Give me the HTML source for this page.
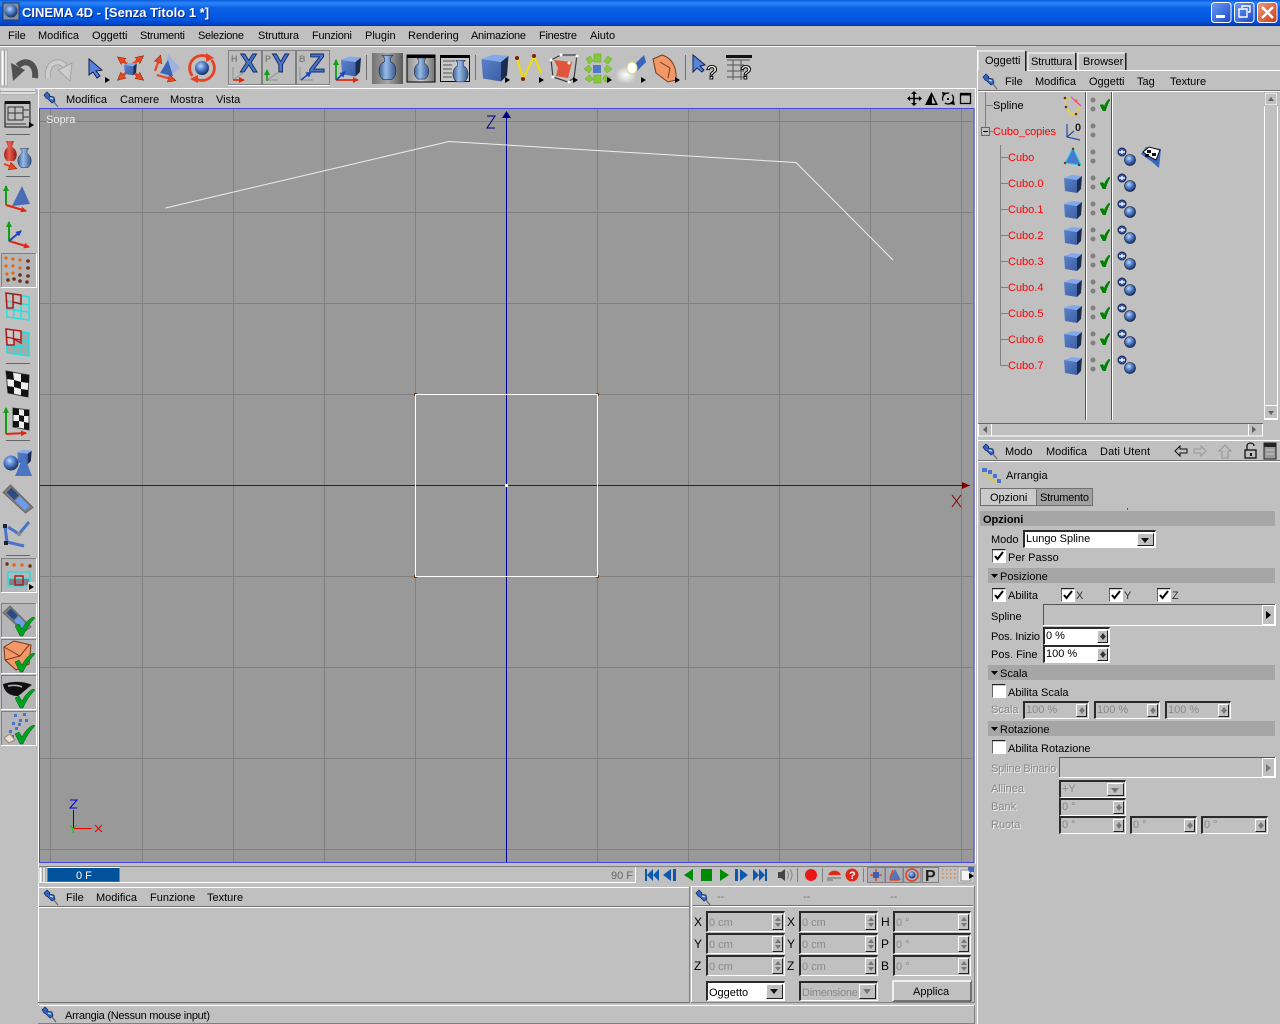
<!DOCTYPE html>
<html><head><meta charset="utf-8"><title>CINEMA 4D</title>
<style>
html,body{margin:0;padding:0;width:1280px;height:1024px;overflow:hidden;background:#c0c0c0}
body{position:relative;font:11px "Liberation Sans",sans-serif;color:#000}
svg{position:absolute;left:0;top:0}
svg text{font-family:"Liberation Sans",sans-serif;font-size:11px;fill:#000}
.r{fill:#f00!important}
.b{font-weight:bold}
.tt{position:absolute;left:22px;top:5px;color:#fff;font:bold 13px/16px "Liberation Sans",sans-serif;text-shadow:1px 1px 0 #0a2a90;white-space:nowrap}
.l{position:absolute;line-height:12px;color:#888;text-shadow:1px 1px 0 #eee;white-space:nowrap}
.f{position:absolute;box-sizing:border-box;border:solid;border-width:2px 1px 1px 2px;border-color:#2a2a2a #fff #fff #2a2a2a;background:#c0c0c0;color:#8a8a8a;line-height:14px;padding-left:1px;white-space:nowrap}
.w{background:#fff;color:#000}
.f i{position:absolute;right:1px;top:1px;bottom:1px;width:9px;background:#c0c0c0;border-right:1px solid #222;border-bottom:1px solid #222;border-top:1px solid #fff;border-left:1px solid #fff}
.f i:before,.f i:after{content:"";position:absolute;left:2px;border-left:3px solid transparent;border-right:3px solid transparent}
.f i:before{top:2px;border-bottom:4px solid #333}
.f i:after{bottom:2px;border-top:4px solid #333}
.f.g i:before{border-bottom-color:#777}.f.g i:after{border-top-color:#777}
.f u{position:absolute;right:1px;top:1px;bottom:1px;width:15px;background:#c0c0c0;border-right:1px solid #222;border-bottom:1px solid #222;border-top:1px solid #fff;border-left:1px solid #fff}
.f u:after{content:"";position:absolute;left:3px;top:4px;border-left:4px solid transparent;border-right:4px solid transparent;border-top:5px solid #111}
.f.g u:after{border-top-color:#777}
.big{padding-top:3px;line-height:15px}
</style></head><body>
<svg width="1280" height="1024" viewBox="0 0 1280 1024" xmlns="http://www.w3.org/2000/svg">
<defs>
<linearGradient id="tb" x1="0" y1="0" x2="0" y2="1"><stop offset="0" stop-color="#0a5ae0"/><stop offset=".12" stop-color="#2c86f8"/><stop offset=".3" stop-color="#0c62e6"/><stop offset=".75" stop-color="#0055e0"/><stop offset=".93" stop-color="#0044c8"/><stop offset="1" stop-color="#00309c"/></linearGradient>
<linearGradient id="wb" x1="0" y1="0" x2="1" y2="1"><stop offset="0" stop-color="#6c9cf4"/><stop offset="1" stop-color="#1c48c8"/></linearGradient>
<linearGradient id="wr" x1="0" y1="0" x2="1" y2="1"><stop offset="0" stop-color="#ee9a80"/><stop offset="1" stop-color="#c83c18"/></linearGradient>
<linearGradient id="cf" x1="0" y1="0" x2="1" y2="1"><stop offset="0" stop-color="#5a82cc"/><stop offset="1" stop-color="#3c5ea2"/></linearGradient>
<radialGradient id="sp" cx=".4" cy=".35" r=".7"><stop offset="0" stop-color="#b8d4fc"/><stop offset=".5" stop-color="#4a78c4"/><stop offset="1" stop-color="#12264f"/></radialGradient>
<linearGradient id="va" x1="0" y1="0" x2="1" y2="0"><stop offset="0" stop-color="#3a5c8c"/><stop offset=".4" stop-color="#98bce8"/><stop offset="1" stop-color="#38568a"/></linearGradient>
<linearGradient id="vr" x1="0" y1="0" x2="1" y2="0"><stop offset="0" stop-color="#a01c14"/><stop offset=".4" stop-color="#e86050"/><stop offset="1" stop-color="#901810"/></linearGradient>
<linearGradient id="bgv" x1="0" y1="0" x2="1" y2="0"><stop offset="0" stop-color="#909090"/><stop offset=".5" stop-color="#d0d0d0"/><stop offset="1" stop-color="#707070"/></linearGradient>
<radialGradient id="glow"><stop offset="0" stop-color="#fff"/><stop offset="1" stop-color="#fff" stop-opacity="0"/></radialGradient>
<marker id="ar" markerUnits="userSpaceOnUse" markerWidth="9" markerHeight="9" refX="6" refY="4" orient="auto"><path d="M0 0L8 4L0 8Z" fill="#e84820" stroke="#801808" stroke-width=".5"/></marker>
<marker id="ag" markerUnits="userSpaceOnUse" markerWidth="7" markerHeight="7" refX="5" refY="3" orient="auto"><path d="M0 0L6 3L0 6Z" fill="#10a010"/></marker>
<marker id="ab" markerUnits="userSpaceOnUse" markerWidth="7" markerHeight="7" refX="5" refY="3" orient="auto"><path d="M0 0L6 3L0 6Z" fill="#1848c0"/></marker>
<marker id="ao" markerUnits="userSpaceOnUse" markerWidth="7" markerHeight="7" refX="5" refY="3" orient="auto"><path d="M0 0L6 3L0 6Z" fill="#e02810"/></marker>
<symbol id="pin" viewBox="0 0 16 16" width="16" height="16" overflow="visible"><path d="M11 10L15 15" stroke="#667" stroke-width="1.2"/><path d="M1 3L4 0L7 3L6 4L11 5L12 9L9 11L5 7L3 6Z" fill="#2f66cc" stroke="#14264e" stroke-width=".7"/><path d="M7 6L10 7" stroke="#b8dcff" stroke-width="1.4"/></symbol>
<symbol id="cube" viewBox="0 0 18 20" width="18" height="20"><path d="M0 4L13 6L13 19L1 17Z" fill="url(#cf)"/><path d="M0 4L8 1L18 2L13 6Z" fill="#84a8ec"/><path d="M13 6L18 2L17 15L13 19Z" fill="#1c2c4c"/></symbol>
<symbol id="tg" viewBox="0 0 19 19" width="19" height="19"><circle cx="5" cy="5" r="4" fill="#3a5aa8" stroke="#101e48"/><path d="M2 5H8M5 3V7" stroke="#f0f4ff" stroke-width="1.4"/><circle cx="13" cy="13" r="5.5" fill="url(#sp)" stroke="#101c38" stroke-width=".6"/></symbol>
<symbol id="ok" viewBox="0 0 10 12" width="10" height="12"><path d="M0 6L3 5.500L4.200 7.500C5.200 4.500 7 2 9 0L10 1C8 4 6.500 8 5.500 12L3 12Z" fill="#008000" stroke="#008000" stroke-width=".5"/></symbol>
<symbol id="big" viewBox="0 0 20 20" width="20" height="20"><path d="M0 9L4 7L7 12C10 6 14 2 18 0L20 1C15 6 11 12 8 19L5 19Z" fill="#00a020" stroke="#006010" stroke-width=".5"/></symbol>
<symbol id="dots" viewBox="0 0 6 15" width="6" height="15"><circle cx="3" cy="3" r="2.5" fill="#808080"/><circle cx="3" cy="12" r="2.5" fill="#808080"/></symbol>
<symbol id="cb" viewBox="0 0 14 14" width="14" height="14"><rect width="14" height="14" fill="#fff"/><path d="M0 13.5V.5H13.5" stroke="#222" stroke-width="1.4" fill="none"/><path d="M3 7L5.500 10L11 3" stroke="#000" stroke-width="2" fill="none"/></symbol>
<symbol id="cb0" viewBox="0 0 14 14" width="14" height="14"><rect width="14" height="14" fill="#fff"/><path d="M0 13.5V.5H13.5" stroke="#222" stroke-width="1.4" fill="none"/></symbol>
<symbol id="vase" viewBox="0 0 18 24" width="18" height="24"><path d="M4 0H14L12 2.500V6C18 9 19 18 13 23H5C-1 18 0 9 6 6V2.500Z" fill="url(#va)" stroke="#203050" stroke-width=".6"/></symbol>
<symbol id="pb" viewBox="0 0 36 35" width="36" height="35"><rect width="36" height="35" fill="#fff"/><rect width="35" height="34" fill="#808080"/><rect x="1" y="1" width="34" height="33" fill="#b6b6b8"/></symbol>
<symbol id="tri" viewBox="0 0 5 6" width="5" height="6"><path d="M0 0L5 3L0 6Z" fill="#000"/></symbol>
<symbol id="qm" viewBox="0 0 14 18" width="14" height="18" overflow="visible"><text x="1" y="15" style="font-size:19px;font-weight:bold;fill:#fff;stroke:#111;stroke-width:1.100">?</text></symbol>
<symbol id="film" viewBox="0 0 34 32" width="34" height="32"><path d="M1 9L9 1L33 25L25 31Z" fill="#7c7c7c" stroke="#666"/><path d="M5 9L10 4L18 12L13 17Z" fill="#2c4a84"/><path d="M14 18L19 13L29 24L24 28Z" fill="#6c9cf0"/></symbol>
</defs>

<rect width="1280" height="1024" fill="#c0c0c0"/>
<!-- title bar -->
<rect width="1280" height="26" fill="url(#tb)"/>
<rect x="3" y="3" width="16" height="17" fill="#8090a8" stroke="#303850"/><circle cx="11" cy="11" r="6.5" fill="url(#sp)"/>
<rect x="1211.5" y="2.5" width="19.5" height="20" rx="3" fill="url(#wb)" stroke="#fff"/><rect x="1216" y="15" width="9" height="3" fill="#fff"/>
<rect x="1234.5" y="2.5" width="19.5" height="20" rx="3" fill="url(#wb)" stroke="#fff"/><path d="M1242 8V6H1250V12H1248M1239 9H1247V17H1239Z" fill="none" stroke="#fff" stroke-width="1.4"/>
<rect x="1257.5" y="2.5" width="19.5" height="20" rx="3" fill="url(#wr)" stroke="#fff"/><path d="M1262 7L1273 18M1273 7L1262 18" stroke="#fff" stroke-width="2.4"/>

<!-- menu -->
<g>
<text x="8" y="39">File</text><text x="38" y="39">Modifica</text><text x="92" y="39">Oggetti</text><text x="140" y="39" textLength="45">Strumenti</text><text x="198" y="39" textLength="46">Selezione</text><text x="258" y="39" textLength="41">Struttura</text><text x="312" y="39" textLength="40">Funzioni</text><text x="365" y="39">Plugin</text><text x="408" y="39">Rendering</text><text x="471" y="39" textLength="55">Animazione</text><text x="539" y="39" textLength="38">Finestre</text><text x="590" y="39">Aiuto</text>
</g>
<rect y="45" width="1280" height="1" fill="#707070"/><rect y="46" width="975" height="1" fill="#fff"/>

<!-- toolbar -->
<rect x="1" y="50" width="3" height="36" fill="#fff" stroke="#808080" stroke-width=".5"/><rect x="5" y="50" width="2" height="36" fill="#fff" stroke="#808080" stroke-width=".5"/>
<path d="M35 78C37 63 25 58 18 66" fill="none" stroke="#505050" stroke-width="6"/><path d="M11 63L25 70L13 81Z" fill="#505050"/>
<path d="M48 78C46 63 58 58 65 66" fill="none" stroke="#a4a4a4" stroke-width="6"/><path d="M48 78C46 63 58 58 65 66" fill="none" stroke="#cdcdcd" stroke-width="4"/><path d="M72 63L58 70L70 81Z" fill="#cdcdcd" stroke="#a4a4a4"/>
<path d="M89 59V75L93 72L97 78L100 76L96 71L102 70Z" fill="#5a84dc" stroke="#102050"/>
<use href="#tri" x="105" y="77"/>
<!-- move -->
<g stroke="#e84820" stroke-width="2.800" fill="none"><path d="M127 64L119 58" marker-end="url(#ar)"/><path d="M133 64L142 57" marker-end="url(#ar)"/><path d="M127 72L119 79" marker-end="url(#ar)"/><path d="M133 72L142 79" marker-end="url(#ar)"/></g>
<use href="#cube" x="124" y="62" width="13" height="14"/>
<!-- scale -->
<path d="M168 54L180 68L168 78L163 74Z" fill="#9eb4dc"/><path d="M168 60L173 76L160 73Z" fill="#3c64b4"/>
<g stroke="#e84820" stroke-width="2.200"><path d="M155 71L160 57" marker-end="url(#ar)"/><path d="M157 75L174 80" marker-end="url(#ar)"/></g>
<!-- rotate -->
<circle cx="202" cy="68" r="7" fill="url(#sp)"/>
<g fill="none" stroke="#e84020" stroke-width="2.800"><path d="M192.500 76A12.500 12.500 0 0 1 207 56.500"/><path d="M211.500 60A12.500 12.500 0 0 1 197 79.500"/></g>
<path d="M206 53L214 58L206 62ZM198 75L190 79L198 83Z" fill="#e84020"/>
<!-- XYZ -->
<rect x="228.500" y="50.500" width="101" height="35" fill="#c0c0c0" stroke="#fff"/>
<g fill="#bcbcbc" stroke="#808080"><rect x="228.500" y="50.500" width="33" height="34"/><rect x="262.500" y="50.500" width="33" height="34"/><rect x="296.500" y="50.500" width="33" height="34"/></g>
<g>
<text x="240" y="72" style="font-size:26px;font-weight:bold;fill:#4a74cc;stroke:#102a60;stroke-width:.9">X</text>
<text x="272" y="72" style="font-size:26px;font-weight:bold;fill:#4a74cc;stroke:#102a60;stroke-width:.9">Y</text>
<text x="309" y="72" style="font-size:26px;font-weight:bold;fill:#4a74cc;stroke:#102a60;stroke-width:.9">Z</text>
<text x="231" y="62" style="font-size:9px;font-weight:bold;fill:#808080">H</text><text x="265" y="62" style="font-size:9px;font-weight:bold;fill:#808080">P</text><text x="299" y="62" style="font-size:9px;font-weight:bold;fill:#808080">B</text>
</g>
<g fill="none" stroke="#909090"><path d="M233 80V67M233 80L244 72M267 80L278 80M267 80L279 72M300 80V67M300 80L313 80"/></g>
<path d="M233 80H244" stroke="#e02810" stroke-width="1.6" marker-end="url(#ao)"/>
<path d="M267 81V70" stroke="#10a010" stroke-width="1.6" marker-end="url(#ag)"/>
<path d="M301 80L311 72" stroke="#1848c0" stroke-width="1.6" marker-end="url(#ab)"/>
<use href="#cube" x="341" y="55" width="20" height="23"/>
<path d="M336 80V60" stroke="#10a010" stroke-width="1.8" marker-end="url(#ag)"/><path d="M336 80H358" stroke="#e02810" stroke-width="1.8" marker-end="url(#ao)"/><path d="M336 80L345 72" stroke="#1848c0" stroke-width="1.8" marker-end="url(#ab)"/>
<rect x="366" y="55" width="1" height="25" fill="#707070"/>
<rect x="372" y="53" width="31" height="31" fill="url(#bgv)"/><rect x="372" y="53" width="31" height="31" fill="#000" opacity=".2"/><use href="#vase" x="378" y="55" width="19" height="26"/>
<rect x="407" y="55" width="28" height="27" fill="url(#bgv)" stroke="#000"/><rect x="407" y="55" width="28" height="3" fill="#000"/><use href="#vase" x="413" y="58" width="17" height="22"/>
<rect x="440.500" y="55.500" width="29" height="26" fill="#c8c8c8" stroke="#111"/><rect x="440" y="55" width="30" height="3" fill="#000"/><path d="M443 61H455M443 65H452M443 69H452M443 73H452M443 77H452" stroke="#555"/><use href="#vase" x="452" y="60" width="17" height="23"/>
<rect x="475" y="55" width="1" height="25" fill="#707070"/>
<use href="#cube" x="481" y="53" width="28" height="30"/><use href="#tri" x="505" y="77"/>
<polyline points="517,58 523,79 534,56 541,73" fill="none" stroke="#f0e000" stroke-width="2"/><g fill="#802000"><circle cx="517" cy="58" r="2"/><circle cx="523" cy="79" r="2"/><circle cx="534" cy="56" r="2"/></g><use href="#tri" x="539" y="77"/>
<path d="M551 60L561 55L577 55L574 78L568 82L553 77Z" fill="none" stroke="#404040" stroke-width="1.2"/><path d="M554 60L572 62L568 78L556 76L558 68Z" fill="#e0553c"/><g fill="#fff"><circle cx="551" cy="60" r="1.5"/><circle cx="561" cy="55" r="1.5"/><circle cx="577" cy="56" r="1.5"/><circle cx="569" cy="63" r="1.5"/><circle cx="553" cy="77" r="1.5"/><circle cx="569" cy="82" r="1.500"/></g><use href="#tri" x="573" y="77"/>
<g fill="#84c83c" stroke="#6aa028" stroke-width=".5"><rect x="594" y="54" width="7" height="8"/><rect x="594" y="75" width="7" height="8"/><path d="M586 59L590 56L593 61L589 64ZM608 56L612 59L608 64L604 61ZM584 69L589 65L592 69L589 73ZM607 65L612 69L607 73L604 69ZM589 75L594 79L589 82L585 79ZM605 75L611 78L605 82L603 78Z"/></g><rect x="593" y="65" width="8" height="8" fill="#5078c8"/><use href="#tri" x="607" y="77"/>
<ellipse cx="626" cy="75" rx="11" ry="9" fill="url(#glow)"/><path d="M633 66L644 55L646 62L636 72Z" fill="#3864bc"/><ellipse cx="632" cy="68" rx="5" ry="6" fill="#fff" stroke="#d8d880"/><use href="#tri" x="641" y="77"/>
<path d="M653 59L662 55C672 58 677 67 676 80L668 82L656 73Z" fill="#f09868" stroke="#7c3818"/><path d="M660 62L670 68L668 78" fill="none" stroke="#7c3818"/><use href="#tri" x="675" y="77"/>
<rect x="685" y="55" width="1" height="25" fill="#707070"/>
<path d="M693 55V72L697 68L702 72L704 70L700 66L705 65Z" fill="#5a84dc" stroke="#102050"/><use href="#qm" x="705" y="64" width="14" height="18"/>
<rect x="726" y="55" width="26" height="3" fill="#111"/><path d="M727 60H750M727 65H744M727 71H744M727 77H744M733 60V80M741 60V80" stroke="#555"/><use href="#qm" x="739" y="64" width="14" height="18"/>
<rect y="88" width="976" height="1" fill="#fff"/>

<!-- left tool grip -->
<rect x="0" y="89" width="36" height="2" fill="#fff" stroke="#808080" stroke-width=".5"/><rect x="0" y="92" width="36" height="2" fill="#fff" stroke="#808080" stroke-width=".5"/>
<rect x="38" y="89" width="1" height="916" fill="#fff"/>
<!-- left tools -->
<rect x="5" y="102" width="25" height="25" fill="none" stroke="#111"/><rect x="5" y="101" width="25" height="3" fill="#111"/><path d="M8 107H23V120H8ZM8 113H23M15 107V120M23 110H29M23 117H29M5 124H26" fill="none" stroke="#333"/><use href="#tri" x="29" y="122"/>
<rect x="6" y="134" width="24" height="1" fill="#666"/>
<path d="M6 141H14L12 147C18 150 18 158 14 161H7C3 158 3 150 8 147Z" fill="url(#vr)"/>
<use href="#vase" x="17" y="147" width="15" height="23"/>
<path d="M4 164L15 168" stroke="#e84820" stroke-width="2" marker-end="url(#ar)"/>
<rect x="6" y="176" width="24" height="1" fill="#666"/>
<path d="M22 186L30 204L12 206Z" fill="#4a6cb4"/><path d="M6 205V186" stroke="#10a010" stroke-width="2" marker-end="url(#ag)"/><path d="M6 205L26 211" stroke="#e02810" stroke-width="2" marker-end="url(#ao)"/>
<path d="M9 241V222" stroke="#10a010" stroke-width="2" marker-end="url(#ag)"/><path d="M9 241L29 247" stroke="#e02810" stroke-width="2" marker-end="url(#ao)"/><path d="M9 241L21 231" stroke="#1848c0" stroke-width="2" marker-end="url(#ab)"/>
<use href="#pb" x="1" y="253"/>
<g fill="#e06810"><circle cx="6" cy="258" r="1.600"/><circle cx="13" cy="259" r="1.600"/><circle cx="20" cy="260" r="1.600"/><circle cx="6" cy="266" r="1.600"/><circle cx="13" cy="266" r="1.600"/><circle cx="20" cy="268" r="1.600"/><circle cx="7" cy="274" r="1.600"/><circle cx="13" cy="273" r="1.600"/></g>
<g fill="#6c3010"><circle cx="28" cy="261" r="1.800"/><circle cx="28" cy="268" r="1.800"/><circle cx="20" cy="275" r="1.800"/><circle cx="28" cy="276" r="1.800"/><circle cx="14" cy="279" r="1.800"/><circle cx="20" cy="281" r="1.800"/><circle cx="27" cy="282" r="1.800"/><circle cx="8" cy="280" r="1.800"/></g>
<g fill="none" stroke="#20e0e0" stroke-width="1.4"><path d="M6 293L29 297L29 320L7 317ZM6 301L29 305M6 309L29 312M13 294L14 318M21 295L21 319"/></g>
<path d="M6 293L21 295L21 304L13 302L13 308L7 308ZM13 294L13 302" fill="none" stroke="#b01818" stroke-width="1.500"/>
<path d="M6 329L29 333L29 356L7 353Z" fill="#a8a8a8"/><g fill="none" stroke="#20e0e0" stroke-width="1.400"><path d="M6 329L29 333L29 356L7 353ZM6 337L29 341M6 345L29 348M13 330L14 354M21 331L21 355"/></g><path d="M6 329L21 331L21 343L14 339L14 345L7 345Z" fill="#c8c8c8" stroke="#b01818" stroke-width="1.500"/><path d="M13.500 330V340M6 337L21 340" stroke="#b01818" stroke-width="1.300"/>
<rect x="6" y="363" width="24" height="1" fill="#666"/>
<path d="M6 371L29 375L28 397L8 393Z" fill="#eee" stroke="#444"/><path d="M6 371L13 372L14 380L7 379ZM21 374L29 375L29 383L21 382ZM14 380L21 382L21 389L14 387ZM7 386L14 387L14 394L8 393ZM21 389L28 390L28 397L21 396Z" fill="#111"/>
<path d="M6 434V408" stroke="#10a010" stroke-width="2" marker-end="url(#ag)"/><path d="M6 434L26 433" stroke="#e02810" stroke-width="2" marker-end="url(#ao)"/>
<path d="M13 408L29 410L29 430L13 427Z" fill="#eee" stroke="#444"/><path d="M13 408L19 409L19 415L13 415ZM24 410L29 410L29 416L24 416ZM19 415L24 416L24 422L19 421ZM13 421L19 421L19 427L13 427ZM24 422L29 423L29 430L24 429Z" fill="#111"/>
<rect x="6" y="440" width="24" height="1" fill="#666"/>
<circle cx="11" cy="463" r="7.500" fill="url(#sp)"/><use href="#cube" x="17" y="449" width="15" height="16"/><path d="M24 455L32 476H15Z" fill="#4a74c4"/>
<use href="#film" x="2" y="484" width="32" height="30"/>
<g fill="none" stroke="#4a74c8" stroke-width="3"><path d="M5 526L7 542L24 546M8 527L19 534L29 522"/></g><g fill="#222"><rect x="3" y="524" width="4" height="4"/><rect x="4" y="541" width="4" height="4"/><circle cx="19" cy="534" r="2" fill="#888"/></g>
<rect x="6" y="555" width="24" height="1" fill="#666"/>
<use href="#pb" x="1" y="558"/>
<g fill="#e06810"><circle cx="14" cy="565" r="1.700"/><circle cx="22" cy="565" r="1.700"/></g><g fill="#6c3010"><circle cx="7" cy="564" r="1.700"/><circle cx="30" cy="566" r="1.700"/></g>
<path d="M8 572H30V586H8ZM8 579H30" fill="none" stroke="#20e0e0" stroke-width="1.300"/><rect x="9" y="579" width="20" height="6" fill="#808088"/><rect x="15" y="576" width="8" height="9" fill="none" stroke="#b01818" stroke-width="1.400"/>
<rect x="28" y="582" width="7" height="9" fill="#d0d0d0"/><use href="#tri" x="29" y="584"/>
<use href="#pb" x="1" y="603"/><use href="#film" x="2" y="605" width="30" height="28"/><use href="#big" x="15" y="617"/>
<use href="#pb" x="1" y="639"/><path d="M4 647L14 641L31 645L29 664L16 670L5 660Z" fill="#f09868" stroke="#7c3818"/><path d="M4 647L20 656L29 645M5 660L20 656" fill="none" stroke="#7c3818"/><use href="#big" x="15" y="653"/>
<use href="#pb" x="1" y="675"/><path d="M3 684C12 681 24 681 32 685C27 688 24 692 18 696C10 696 4 692 3 684Z" fill="#111"/><path d="M8 686C13 685 18 685 22 687" stroke="#bbb" stroke-width="1.500" fill="none"/><use href="#big" x="15" y="689"/>
<use href="#pb" x="1" y="711"/><g fill="#4a74c8"><rect x="14" y="714" width="3" height="3"/><rect x="23" y="713" width="3" height="3"/><rect x="19" y="719" width="3" height="3"/><rect x="12" y="722" width="3" height="3"/><rect x="25" y="719" width="3" height="3"/><rect x="9" y="730" width="3" height="3"/><rect x="15" y="727" width="3" height="3"/><rect x="11" y="735" width="3" height="3"/><rect x="18" y="723" width="3" height="3"/></g><path d="M4 738L10 734L15 740L9 743Z" fill="#e8e0d0" stroke="#a08870"/><use href="#big" x="15" y="725"/>

<!-- viewport menu -->
<use href="#pin" x="43" y="92"/>
<text x="66" y="103">Modifica</text><text x="120" y="103">Camere</text><text x="170" y="103">Mostra</text><text x="216" y="103">Vista</text>
<path d="M914 92V105M908 98.500H921" stroke="#000" stroke-width="1.600"/><path d="M914 91L911 94H917ZM914 106L911 103H917ZM907 98.500L910 96V101ZM922 98.500L919 96V101Z" fill="#000"/>
<path d="M925 105L931.500 92L938 105Z" fill="#000"/><path d="M932 96L935.500 103.500H932Z" fill="#c0c0c0"/>
<circle cx="948" cy="98.500" r="5.500" fill="none" stroke="#000" stroke-width="1.300" stroke-dasharray="12 3"/><path d="M942 92L947 93L943 96ZM955 105L950 104L954 101Z" fill="#000"/><rect x="947" y="98" width="2" height="2" fill="#000"/>
<rect x="960.500" y="93.500" width="10" height="10" fill="none" stroke="#000" stroke-width="1.300"/><rect x="960" y="93" width="11" height="2.500" fill="#000"/>
<rect x="975" y="46" width="1" height="1" fill="#fff"/><rect x="975" y="88" width="1" height="776" fill="#fff"/>

<!-- viewport -->
<rect x="39.500" y="108.500" width="934.500" height="754" fill="#999" stroke="#4848e0"/>
<g fill="#808080">
<rect x="50" y="109" width="1" height="753"/><rect x="142" y="109" width="1" height="753"/><rect x="233" y="109" width="1" height="753"/><rect x="324" y="109" width="1" height="753"/><rect x="415" y="109" width="1" height="753"/><rect x="597" y="109" width="1" height="753"/><rect x="688" y="109" width="1" height="753"/><rect x="779" y="109" width="1" height="753"/><rect x="870" y="109" width="1" height="753"/><rect x="961" y="109" width="1" height="753"/>
<rect x="40" y="121" width="934" height="1"/><rect x="40" y="212" width="934" height="1"/><rect x="40" y="303" width="934" height="1"/><rect x="40" y="394" width="934" height="1"/><rect x="40" y="576" width="934" height="1"/><rect x="40" y="667" width="934" height="1"/><rect x="40" y="758" width="934" height="1"/><rect x="40" y="849" width="934" height="1"/>
</g>
<rect x="40" y="485" width="930" height="1" fill="#800000"/><path d="M962 482L970 485.500L962 489Z" fill="#800000"/>
<rect x="506" y="112" width="1" height="750" fill="#0000a0"/><path d="M502 118L506.500 111L511 118Z" fill="#000080"/>
<rect x="505" y="484" width="3" height="3" fill="#fff"/>
<rect x="415.500" y="394.500" width="182" height="182" fill="none" stroke="#fff"/>
<path d="M414 393h3v1h-2v2h-1zM596 393h3v3h-1v-2h-2zM414 575h1v2h2v1h-3zM598 575h1v3h-3v-1h2z" fill="#803000"/>
<polyline points="165.500,208 449,141.500 796,162.500 893,260" fill="none" stroke="#eee" stroke-width="1"/>
<path d="M487 116H495L487 128H495" fill="none" stroke="#000080"/>
<path d="M952 495L961 507M961 495L952 507" stroke="#800000"/>
<text x="46" y="123" style="fill:#eee">Sopra</text>
<path d="M70 800H77L70 808H77" fill="none" stroke="#0000e0"/><rect x="73" y="810" width="1" height="19" fill="#0000e0"/><rect x="73" y="828" width="19" height="1" fill="#f00"/><path d="M70 825L73 829L77 825M73 829V833" fill="none" stroke="#00d000"/><path d="M95 825L102 832M102 825L95 832" stroke="#e00000"/>

<!-- timeline -->
<rect x="39" y="863" width="936" height="3" fill="#c0c0c0"/><rect x="39" y="866" width="936" height="1" fill="#808080"/>
<rect x="39" y="867" width="3" height="16" fill="#fff" stroke="#808080" stroke-width=".5"/><rect x="43" y="867" width="2" height="16" fill="#fff" stroke="#808080" stroke-width=".5"/>
<rect x="47.500" y="867.500" width="72" height="14.500" fill="#00529c" stroke="#808080"/><rect x="47" y="867" width="73" height="1" fill="#fff"/><text x="76" y="879" style="fill:#fff">0 F</text>
<rect x="39" y="882" width="597" height="1" fill="#fff"/><rect x="635" y="867" width="1" height="16" fill="#fff"/>
<text x="611" y="879" style="fill:#666">90 F</text>
<g fill="#0c58b0"><path d="M645 869h2v12h-2zM659 869V881L653 875ZM653 869V881L647 875ZM663 875L671 869V881ZM673 869h3v12h-3zM735 869h3v12h-3zM740 869L748 875L740 881ZM753 869L759 875L753 881ZM759 869L765 875L759 881ZM765 869h2v12h-2z"/></g>
<g fill="#008c00"><path d="M693 869V881L684 875ZM720 869L729 875L720 881Z"/><rect x="701" y="869" width="11" height="12"/></g>
<path d="M778 872h3l4-3v12l-4-3h-3z" fill="#444"/><path d="M787 871Q790 875 787 879M790 869Q794 875 790 881" fill="none" stroke="#888"/>
<rect x="797" y="868" width="1" height="14" fill="#808080"/>
<circle cx="811" cy="875" r="6" fill="#e81818"/>
<rect x="822" y="868" width="1" height="14" fill="#808080"/>
<path d="M828 875A7 7 0 0 1 841 875Z" fill="#e02818"/><path d="M827 878h14M827 880h6" stroke="#888" stroke-width="1.500"/>
<circle cx="852" cy="875" r="6.500" fill="#e02818"/><text x="849" y="879" style="fill:#fff;font-weight:bold">?</text>
<rect x="863" y="868" width="1" height="14" fill="#808080"/>
<g fill="#aeaeb6" stroke="#808080"><rect x="867.500" y="867.500" width="17.500" height="15"/><rect x="885.500" y="867.500" width="17.500" height="15"/><rect x="903.500" y="867.500" width="17.500" height="15"/></g>
<path d="M876 869V881M870 875H882" stroke="#e04820" stroke-width="1.500"/><rect x="873" y="872" width="6" height="6" fill="#3860b0"/>
<path d="M895 869L901 880H889Z" fill="#5474b8"/><path d="M890 878L893 870M890 880H899" stroke="#e04820" stroke-width="1.500"/>
<circle cx="912" cy="875" r="3.500" fill="url(#sp)"/><circle cx="912" cy="875" r="6" fill="none" stroke="#e04020" stroke-width="1.500"/>
<rect x="922.500" y="867.500" width="16" height="15" fill="#c0c0c0" stroke="#808080"/><text x="925" y="881" style="font-size:16px;font-weight:bold;fill:#222">P</text>
<g fill="#f08030"><rect x="942" y="869" width="1.500" height="1.500"/><rect x="946" y="869" width="1.500" height="1.500"/><rect x="950" y="869" width="1.500" height="1.500"/><rect x="954" y="869" width="1.500" height="1.500"/><rect x="942" y="873" width="1.500" height="1.500"/><rect x="946" y="873" width="1.500" height="1.500"/><rect x="950" y="873" width="1.500" height="1.500"/><rect x="954" y="873" width="1.500" height="1.500"/><rect x="942" y="877" width="1.500" height="1.500"/><rect x="946" y="877" width="1.500" height="1.500"/><rect x="950" y="877" width="1.500" height="1.500"/><rect x="954" y="877" width="1.500" height="1.500"/></g>
<rect x="958" y="867" width="16" height="16" fill="#d8d8d8" stroke="#a0a0a0"/><rect x="968" y="867" width="6" height="5" fill="#3868d0"/><path d="M961 870h7l3 3v8h-10z" fill="#f4f4f4" stroke="#888"/><use href="#tri" x="969" y="873"/>

<!-- material panel -->
<rect x="39" y="887" width="651" height="1" fill="#fff"/><use href="#pin" x="43" y="890"/>
<text x="66" y="901">File</text><text x="96" y="901">Modifica</text><text x="150" y="901">Funzione</text><text x="207" y="901">Texture</text>
<rect x="39" y="906" width="651" height="1" fill="#707070"/><rect x="39" y="907" width="651" height="1" fill="#fff"/>
<rect x="38" y="1002" width="651" height="1" fill="#707070"/><rect x="689" y="887" width="1" height="116" fill="#808080"/>
<!-- coord panel -->
<rect x="691" y="887" width="1" height="116" fill="#fff"/><rect x="691" y="886" width="284" height="1" fill="#fff"/><rect x="691" y="1002" width="284" height="1" fill="#808080"/><rect x="974" y="886" width="1" height="117" fill="#808080"/>
<use href="#pin" x="695" y="890"/>
<text x="717" y="900" style="fill:#777">--</text><text x="803" y="900" style="fill:#777">--</text><text x="890" y="900" style="fill:#777">--</text>
<rect x="693" y="905" width="280" height="1" fill="#707070"/><rect x="693" y="906" width="280" height="1" fill="#fff"/>
<g><text x="694" y="926" style="font-size:12px">X</text><text x="694" y="948" style="font-size:12px">Y</text><text x="694" y="970" style="font-size:12px">Z</text><text x="787" y="926" style="font-size:12px">X</text><text x="787" y="948" style="font-size:12px">Y</text><text x="787" y="970" style="font-size:12px">Z</text><text x="881" y="926" style="font-size:12px">H</text><text x="881" y="948" style="font-size:12px">P</text><text x="881" y="970" style="font-size:12px">B</text></g>
<rect x="893" y="981" width="78" height="20" fill="#c0c0c0" stroke="#222"/><path d="M893 1001V981H971" fill="none" stroke="#fff" stroke-width="1.500"/><text x="913" y="995">Applica</text>

<!-- status -->
<rect x="39" y="1005" width="936" height="1" fill="#fff"/><use href="#pin" x="41" y="1007"/><text x="65" y="1019" textLength="145">Arrangia (Nessun mouse input)</text>
<rect x="38" y="1023" width="937" height="1" fill="#808080"/><rect x="974" y="1005" width="1" height="19" fill="#808080"/>

<!-- right panel frame -->
<rect x="977" y="50" width="1" height="974" fill="#fff"/>
<rect x="1027" y="70" width="253" height="1" fill="#fff"/>
<path d="M978 70V51H1025" fill="none" stroke="#fff"/><rect x="1025" y="51" width="1.500" height="20" fill="#222"/>
<path d="M1028 70V53H1075" fill="none" stroke="#fff"/><rect x="1075" y="53" width="1.500" height="17" fill="#222"/>
<path d="M1078 70V53H1125" fill="none" stroke="#fff"/><rect x="1125" y="53" width="1.500" height="17" fill="#222"/>
<text x="985" y="64">Oggetti</text><text x="1031" y="65" textLength="41">Struttura</text><text x="1083" y="65">Browser</text>
<use href="#pin" x="982" y="74"/>
<text x="1005" y="85">File</text><text x="1035" y="85">Modifica</text><text x="1089" y="85">Oggetti</text><text x="1137" y="85">Tag</text><text x="1170" y="85">Texture</text>
<rect x="978" y="90" width="302" height="1" fill="#707070"/><rect x="978" y="91" width="302" height="1" fill="#fff"/>
<!-- tree -->
<rect x="1085" y="92" width="1" height="328" fill="#555"/><rect x="1086" y="92" width="1" height="328" fill="#fff"/><rect x="1111" y="92" width="1" height="328" fill="#555"/><rect x="1112" y="92" width="1" height="328" fill="#fff"/>
<g fill="#808080"><rect x="985" y="92" width="1" height="35"/><rect x="985" y="105" width="8" height="1"/><rect x="990" y="131" width="3" height="1"/><rect x="1000" y="145" width="1" height="221"/>
<rect x="1000" y="157" width="8" height="1"/><rect x="1000" y="183" width="8" height="1"/><rect x="1000" y="209" width="8" height="1"/><rect x="1000" y="235" width="8" height="1"/><rect x="1000" y="261" width="8" height="1"/><rect x="1000" y="287" width="8" height="1"/><rect x="1000" y="313" width="8" height="1"/><rect x="1000" y="339" width="8" height="1"/><rect x="1000" y="365" width="8" height="1"/></g>
<rect x="981.500" y="127.500" width="8" height="8" fill="none" stroke="#666"/><rect x="983" y="131" width="5" height="1" fill="#000"/>
<text x="993" y="109">Spline</text>
<text class="r" x="993" y="135" textLength="63">Cubo_copies</text>
<text class="r" x="1008" y="161">Cubo</text><text class="r" x="1008" y="187">Cubo.0</text><text class="r" x="1008" y="213">Cubo.1</text><text class="r" x="1008" y="239">Cubo.2</text><text class="r" x="1008" y="265">Cubo.3</text><text class="r" x="1008" y="291">Cubo.4</text><text class="r" x="1008" y="317">Cubo.5</text><text class="r" x="1008" y="343">Cubo.6</text><text class="r" x="1008" y="369">Cubo.7</text>
<path d="M1065 98L1072 98L1080 106L1076 113L1071 115L1066 106Z" fill="none" stroke="#e8d820" stroke-width="1.200"/><path d="M1071 97L1081 106" stroke="#f040e0" stroke-width="1.500"/><g fill="#803000"><circle cx="1065" cy="98" r="1.300"/><circle cx="1066" cy="107" r="1.300"/><circle cx="1076" cy="114" r="1.300"/></g><circle cx="1076" cy="101" r="1.500" fill="#f06820"/>
<path d="M1067 124V137L1080 140M1067 137L1074 131" fill="none" stroke="#2850a0" stroke-width="1.200"/><text x="1075" y="131" style="font-weight:bold;font-size:11px;fill:#222">0</text>
<path d="M1073 148L1081 165L1065 163Z" fill="#4878d0" stroke="#18d8e8"/><g fill="#803000"><circle cx="1073" cy="149" r="1.200"/><circle cx="1065" cy="163" r="1.200"/><circle cx="1079" cy="165" r="1.200"/></g>
<use href="#cube" x="1064" y="174"/><use href="#cube" x="1064" y="200"/><use href="#cube" x="1064" y="226"/><use href="#cube" x="1064" y="252"/><use href="#cube" x="1064" y="278"/><use href="#cube" x="1064" y="304"/><use href="#cube" x="1064" y="330"/><use href="#cube" x="1064" y="356"/>
<use href="#dots" x="1090" y="97"/><use href="#dots" x="1090" y="123"/><use href="#dots" x="1090" y="149"/><use href="#dots" x="1090" y="175"/><use href="#dots" x="1090" y="201"/><use href="#dots" x="1090" y="227"/><use href="#dots" x="1090" y="253"/><use href="#dots" x="1090" y="279"/><use href="#dots" x="1090" y="305"/><use href="#dots" x="1090" y="331"/><use href="#dots" x="1090" y="357"/>
<use href="#ok" x="1100" y="99"/><use href="#ok" x="1100" y="177"/><use href="#ok" x="1100" y="203"/><use href="#ok" x="1100" y="229"/><use href="#ok" x="1100" y="255"/><use href="#ok" x="1100" y="281"/><use href="#ok" x="1100" y="307"/><use href="#ok" x="1100" y="333"/><use href="#ok" x="1100" y="359"/>
<use href="#tg" x="1117" y="147"/><use href="#tg" x="1117" y="173"/><use href="#tg" x="1117" y="199"/><use href="#tg" x="1117" y="225"/><use href="#tg" x="1117" y="251"/><use href="#tg" x="1117" y="277"/><use href="#tg" x="1117" y="303"/><use href="#tg" x="1117" y="329"/><use href="#tg" x="1117" y="355"/>
<path d="M1141 154L1146 147L1161 149L1159 168L1152 162Z" fill="#3868c0"/><path d="M1143 152L1149 147L1160 150L1156 160L1150 157Z" fill="#fff" stroke="#111"/><path d="M1147 150h4v3h-4zM1152 153h4v3h-4zM1145 154h4v3h-4z" fill="#111"/>
<!-- scrollbars -->
<rect x="1264.500" y="92.500" width="13" height="327" fill="#c0c0c0" stroke="#fff"/><rect x="1264.500" y="92.500" width="13" height="13" fill="#c0c0c0" stroke="#808080"/><rect x="1265" y="93" width="12" height="12" fill="none" stroke="#fff"/><path d="M1268 101L1271 97L1274 101Z" fill="#606060"/>
<rect x="1264.500" y="405.500" width="13" height="13" fill="#c0c0c0" stroke="#fff"/><path d="M1268 411L1271 415L1274 411Z" fill="#606060"/>
<rect x="978.500" y="423.500" width="284" height="12.500" fill="#c0c0c0" stroke="#fff"/><rect x="978" y="423" width="285" height="1" fill="#666"/><path d="M991.500 424V436M1248.500 424V436" stroke="#fff"/><path d="M987 426L983 429.500L987 433ZM1252 426L1256 429.500L1252 433Z" fill="#606060"/>
<rect x="1263" y="420" width="16" height="17" fill="#c0c0c0"/><rect x="1278" y="92" width="2" height="345" fill="#c0c0c0"/>

<!-- attribute -->
<rect x="978" y="440" width="302" height="1" fill="#fff"/><use href="#pin" x="982" y="444"/>
<text x="1005" y="455">Modo</text><text x="1046" y="455">Modifica</text><text x="1100" y="455" textLength="50">Dati Utent</text>
<path d="M1175 451L1180 446V449H1187V453H1180V456Z" fill="none" stroke="#111"/><path d="M1206 451L1201 446V449H1194V453H1201V456Z" fill="none" stroke="#999"/><path d="M1225 445L1231 451H1228V458H1222V451H1219Z" fill="none" stroke="#999"/>
<rect x="1245" y="450" width="11" height="8" fill="none" stroke="#111" stroke-width="1.300"/><path d="M1247 450V446C1247 442 1254 442 1254 446" fill="none" stroke="#111" stroke-width="1.300"/><rect x="1250" y="453" width="2" height="3" fill="#111"/>
<rect x="1264" y="443" width="12" height="16" fill="#999" stroke="#222"/><rect x="1264" y="443" width="12" height="4" fill="#222"/><path d="M1266 450h8M1266 454h8" stroke="#ccc"/>
<rect x="978" y="460" width="302" height="1" fill="#707070"/><rect x="978" y="461" width="302" height="1" fill="#fff"/>
<path d="M984 473C990 480 995 481 1000 484" fill="none" stroke="#e0d020" stroke-width="1.200"/><g fill="#4a74d0"><rect x="982" y="468" width="5" height="4"/><rect x="988" y="470" width="4" height="4"/><rect x="993" y="474" width="4" height="4"/><rect x="997" y="479" width="4" height="4"/></g>
<text x="1006" y="479">Arrangia</text>
<rect x="980.500" y="488.500" width="56" height="17" fill="#cacaca" stroke="#707070"/><rect x="1036.500" y="488.500" width="56" height="17" fill="#a2a2a2" stroke="#707070"/>
<text x="990" y="501">Opzioni</text><text x="1040" y="501" textLength="49">Strumento</text>
<rect x="1127" y="508" width="1" height="2" fill="#555"/>
<rect x="980" y="511" width="295" height="15" fill="#a6a6a6"/><text x="983" y="523" class="b" style="font-weight:bold">Opzioni</text>
<text x="991" y="543">Modo</text>
<use href="#cb" x="992" y="549"/><text x="1008" y="561">Per Passo</text>
<rect x="988" y="568" width="287" height="15" fill="#a6a6a6"/><path d="M991 574H998L994.500 578Z" fill="#000"/><text x="1000" y="580">Posizione</text>
<use href="#cb" x="992" y="588"/><text x="1008" y="599">Abilita</text>
<use href="#cb" x="1061" y="588"/><text x="1076" y="599" style="fill:#333">X</text>
<use href="#cb" x="1109" y="588"/><text x="1124" y="599" style="fill:#333">Y</text>
<use href="#cb" x="1157" y="588"/><text x="1172" y="599" style="fill:#333">Z</text>
<text x="991" y="620">Spline</text>
<path d="M1043.500 626V604.500H1275" fill="none" stroke="#555"/><path d="M1043 625.500H1275.500V604" fill="none" stroke="#fff"/><rect x="1262.500" y="605.500" width="12" height="19" fill="#c0c0c0" stroke="#fff"/><path d="M1266 611L1271 615L1266 619Z" fill="#000"/>
<text x="991" y="640" textLength="49">Pos. Inizio</text><text x="991" y="658">Pos. Fine</text>
<rect x="988" y="665" width="287" height="15" fill="#a6a6a6"/><path d="M991 671H998L994.500 675Z" fill="#000"/><text x="1000" y="677">Scala</text>
<use href="#cb0" x="992" y="684"/><text x="1008" y="696">Abilita Scala</text>
<rect x="988" y="721" width="287" height="15" fill="#a6a6a6"/><path d="M991 727H998L994.500 731Z" fill="#000"/><text x="1000" y="733">Rotazione</text>
<use href="#cb0" x="992" y="740"/><text x="1008" y="752">Abilita Rotazione</text>
<path d="M1059.500 778V757.500H1275" fill="none" stroke="#555"/><path d="M1059 777.500H1275.500V757" fill="none" stroke="#fff"/><rect x="1262.500" y="758.500" width="12" height="18" fill="#c0c0c0" stroke="#fff"/><path d="M1266 764L1271 768L1266 772Z" fill="#777"/>
</svg>

<div class="tt">CINEMA 4D - [Senza Titolo 1 *]</div>

<div class="l" style="left:991px;top:704px">Scala</div>
<div class="l" style="left:991px;top:763px;letter-spacing:-.2px">Spline Binario</div>
<div class="l" style="left:991px;top:783px">Allinea</div>
<div class="l" style="left:991px;top:801px">Bank</div>
<div class="l" style="left:991px;top:819px">Ruota</div>

<div class="f w" style="left:1023px;top:530px;width:133px;height:18px">Lungo Spline<u></u></div>
<div class="f w" style="left:1043px;top:627px;width:67px;height:18px">0 %<i></i></div>
<div class="f w" style="left:1043px;top:645px;width:67px;height:18px">100 %<i></i></div>
<div class="f g" style="left:1023px;top:701px;width:66px;height:18px">100 %<i></i></div>
<div class="f g" style="left:1094px;top:701px;width:66px;height:18px">100 %<i></i></div>
<div class="f g" style="left:1165px;top:701px;width:66px;height:18px">100 %<i></i></div>
<div class="f g" style="left:1059px;top:780px;width:67px;height:18px">+Y<u></u></div>
<div class="f g" style="left:1059px;top:798px;width:67px;height:18px">0 °<i></i></div>
<div class="f g" style="left:1059px;top:816px;width:67px;height:18px">0 °<i></i></div>
<div class="f g" style="left:1130px;top:816px;width:67px;height:18px">0 °<i></i></div>
<div class="f g" style="left:1201px;top:816px;width:67px;height:18px">0 °<i></i></div>

<div class="f g big" style="left:706px;top:911px;width:79px;height:21px">0 cm<i></i></div>
<div class="f g big" style="left:706px;top:933px;width:79px;height:21px">0 cm<i></i></div>
<div class="f g big" style="left:706px;top:955px;width:79px;height:21px">0 cm<i></i></div>
<div class="f g big" style="left:799px;top:911px;width:79px;height:21px">0 cm<i></i></div>
<div class="f g big" style="left:799px;top:933px;width:79px;height:21px">0 cm<i></i></div>
<div class="f g big" style="left:799px;top:955px;width:79px;height:21px">0 cm<i></i></div>
<div class="f g big" style="left:893px;top:911px;width:78px;height:21px">0 °<i></i></div>
<div class="f g big" style="left:893px;top:933px;width:78px;height:21px">0 °<i></i></div>
<div class="f g big" style="left:893px;top:955px;width:78px;height:21px">0 °<i></i></div>
<div class="f w big" style="left:706px;top:981px;width:79px;height:20px">Oggetto<u></u></div>
<div class="f g big" style="left:799px;top:981px;width:79px;height:20px;letter-spacing:-.25px">Dimensione<u></u></div>
</body></html>
